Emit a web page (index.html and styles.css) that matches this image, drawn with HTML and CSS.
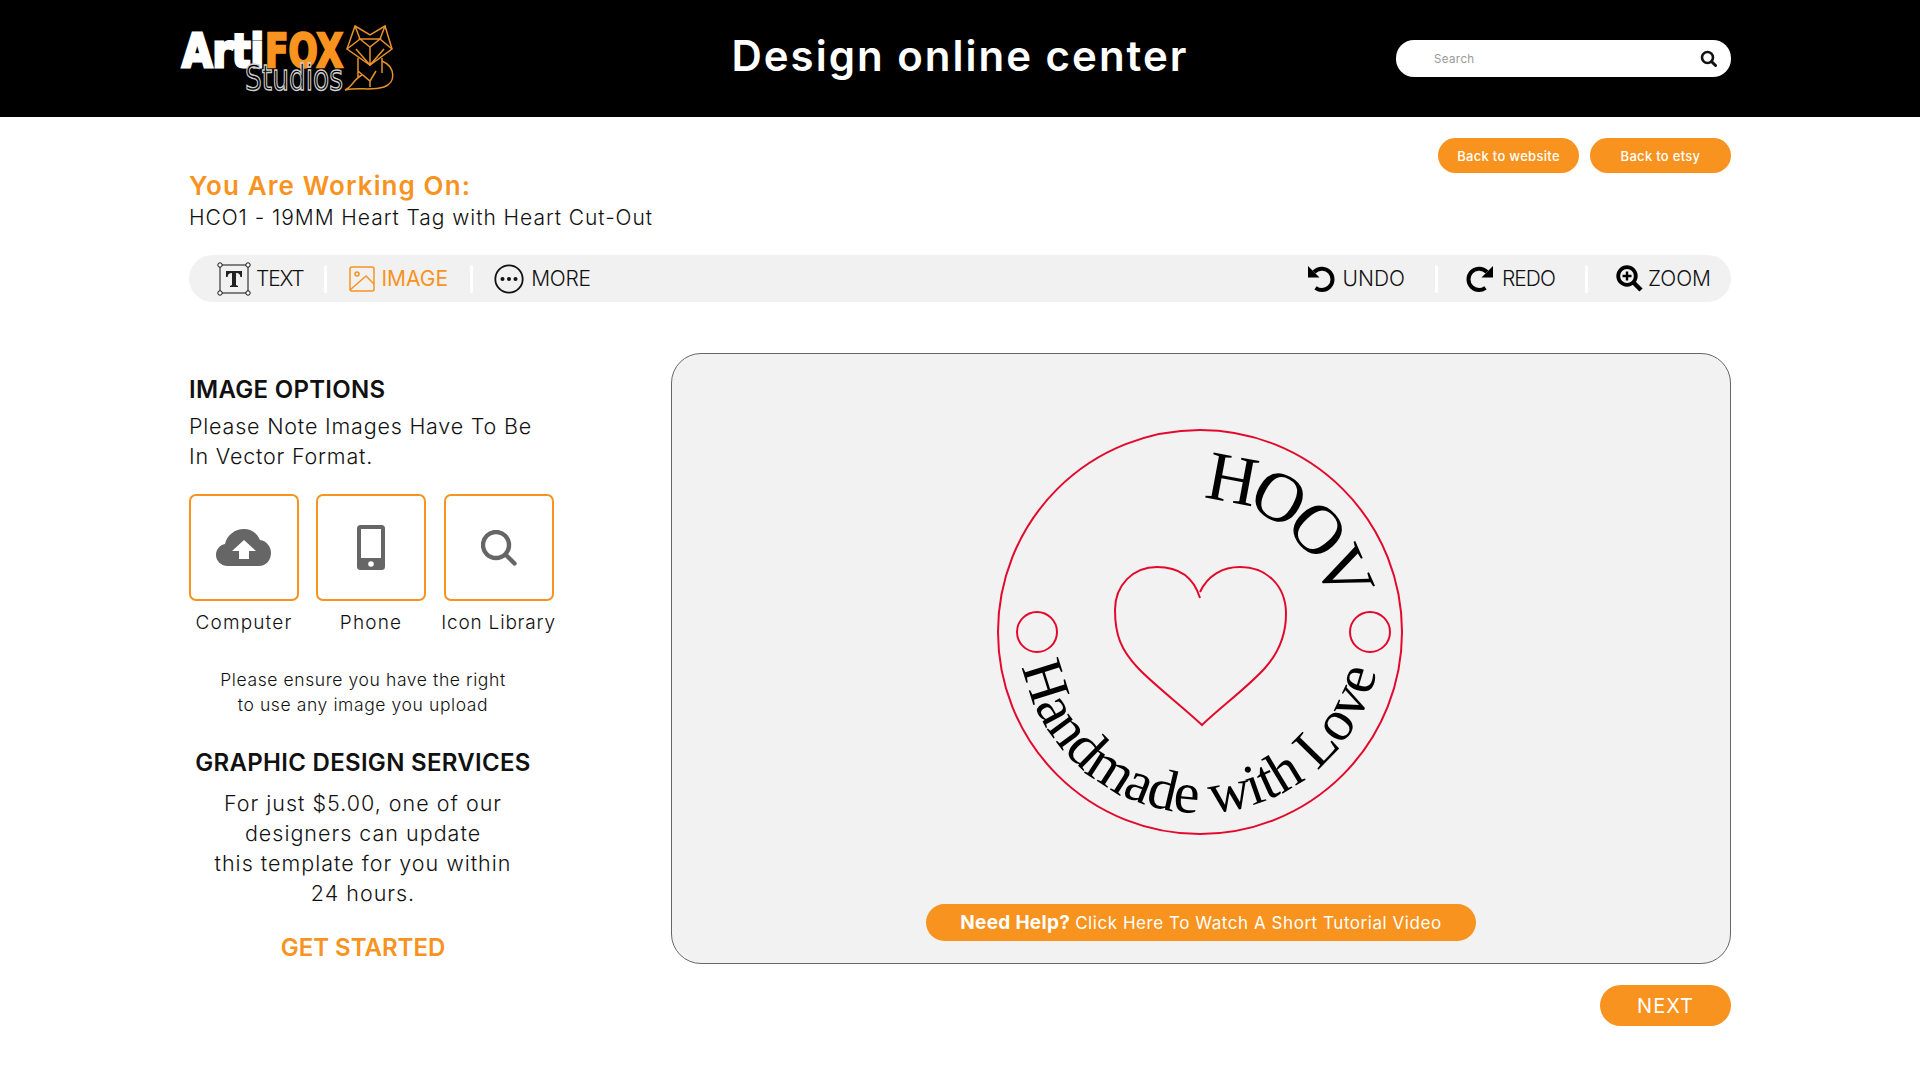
FILE: index.html
```html
<!DOCTYPE html>
<html lang="en">

<head>
    <meta charset="UTF-8">
    <meta name="viewport" content="width=device-width, initial-scale=1.0">
    <title>Design online center</title>

    <link rel="stylesheet" href="styles.css">
</head>

<body>
    <header class="top-bar">
        <svg class="logo" width="215" height="76" viewBox="0 0 215 76">
            <text class="logo-arti" x="2" y="46" textLength="82" lengthAdjust="spacingAndGlyphs">Arti</text>
            <text class="logo-fox" x="85" y="46" textLength="78" lengthAdjust="spacingAndGlyphs">FOX</text>
            <text class="logo-studios" x="65" y="69" textLength="98" lengthAdjust="spacingAndGlyphs">Studios</text>
            <g class="logo-mark">
                <path d="M175 5 L190 14 L205 5 L212 28 L190 44 L167 28 Z" />
                <path d="M175 5 L180 18 L167 28 M205 5 L200 18 L212 28 M180 18 H200 L190 26 Z M176 28 L190 44 L204 28 M190 26 V44" />
                <path d="M178 37 V56 M202 37 V52 M178 50 L190 60 L196 50 M190 60 V66" />
                <path d="M165 69 C172 66 174 58 182 54 M202 40 C216 46 216 62 204 66 C192 70 178 66 165 69" />
            </g>
        </svg>
        <h1 class="site-title">Design online center</h1>
        <div class="search-box">
            <span class="search-hint">Search</span>
            <svg width="17" height="17" viewBox="0 0 17 17">
                <circle cx="7.5" cy="7.5" r="5.5" fill="none" stroke="#111" stroke-width="2.6" />
                <path d="M11.5 11.5 L15.5 15.5" stroke="#111" stroke-width="3" stroke-linecap="round" />
            </svg>
        </div>
    </header>

    <main class="page">
        <div class="back-links">
            <a class="back-button" href="#">Back to website</a>
            <a class="back-button" href="#">Back to etsy</a>
        </div>

        <h2 class="working-title">You Are Working On:</h2>
        <p class="working-product">HCO1 - 19MM Heart Tag with Heart Cut-Out</p>

        <div class="toolbar">
            <div class="tool-group">
                <a class="tool tool-text" href="#">
                    <svg width="34" height="34" viewBox="0 0 34 34">
                        <rect x="3" y="3" width="28" height="28" fill="none" stroke="#111" stroke-width="1" />
                        <circle cx="3" cy="3" r="2.2" fill="#fff" stroke="#111" />
                        <circle cx="31" cy="3" r="2.2" fill="#fff" stroke="#111" />
                        <circle cx="3" cy="31" r="2.2" fill="#fff" stroke="#111" />
                        <circle cx="31" cy="31" r="2.2" fill="#fff" stroke="#111" />
                        <path d="M9 9 H25 V15 H23.4 C23 12 22 11 19 11 V23 L21 24 V25 H13 V24 L15 23 V11 C12 11 11 12 10.600 15 H9 Z" fill="#222" />
                    </svg>
                    <span>TEXT</span>
                </a>
                <span class="tool-sep"></span>
                <a class="tool tool-active tool-image" href="#">
                    <svg width="26" height="26" viewBox="0 0 26 26" fill="none" stroke="#f7931e" stroke-width="1.5">
                        <rect x="1" y="1" width="24" height="24" rx="2" />
                        <circle cx="8" cy="8" r="2" />
                        <path d="M1 24 L17 10 L25 18" />
                    </svg>
                    <span>IMAGE</span>
                </a>
                <span class="tool-sep"></span>
                <a class="tool tool-more" href="#">
                    <svg width="30" height="30" viewBox="0 0 30 30">
                        <circle cx="15" cy="15" r="13.700" fill="none" stroke="#111" stroke-width="1.800" />
                        <circle cx="8.500" cy="15" r="2" fill="#111" />
                        <circle cx="15" cy="15" r="2" fill="#111" />
                        <circle cx="21.500" cy="15" r="2" fill="#111" />
                    </svg>
                    <span>MORE</span>
                </a>
            </div>
            <div class="tool-group tool-group-right">
                <a class="tool tool-undo" href="#">
                    <svg width="28" height="28" viewBox="0 0 28 28" fill="none">
                        <path d="M7 7 C10 4 13 3.500 15.500 3.700 C21.500 4.200 25.500 8.800 25.500 14.500 C25.500 20.500 20.500 25 15 25 C12.500 25 10.500 24.200 8.500 22.800" stroke="#000" stroke-width="4" />
                        <path d="M1 1 L1 12.500 L12.500 12.500 Z" fill="#000" />
                    </svg>
                    <span>UNDO</span>
                </a>
                <span class="tool-sep"></span>
                <a class="tool tool-redo" href="#">
                    <svg width="28" height="28" viewBox="0 0 28 28" fill="none">
                        <path d="M21 7 C18 4 15 3.500 12.500 3.700 C6.500 4.200 2.500 8.800 2.500 14.500 C2.500 20.500 7.500 25 13 25 C15.500 25 17.500 24.200 19.500 22.800" stroke="#000" stroke-width="4" />
                        <path d="M27 1 L27 12.500 L15.500 12.500 Z" fill="#000" />
                    </svg>
                    <span>REDO</span>
                </a>
                <span class="tool-sep"></span>
                <a class="tool tool-zoom" href="#">
                    <svg width="27" height="27" viewBox="0 0 27 27" fill="none">
                        <circle cx="11" cy="11" r="8.800" stroke="#000" stroke-width="3.800" />
                        <path d="M17.500 17.500 L25 25" stroke="#000" stroke-width="4.500" />
                        <path d="M11 6.500 V15.500 M6.500 11 H15.500" stroke="#000" stroke-width="2.400" />
                    </svg>
                    <span>ZOOM</span>
                </a>
            </div>
        </div>

        <div class="workspace">
            <section class="options">
                <h3 class="options-title">IMAGE OPTIONS</h3>
                <p class="options-note">Please Note Images Have To Be<br>In Vector Format.</p>

                <div class="sources">
                    <div class="source">
                        <a class="source-box" href="#">
                            <svg width="56" height="38" viewBox="0 0 56 38">
                                <path d="M12 37 C5 37 0 32 0 26 C0 20 4 16 9 15 C11 6 19 0 28 0 C35 0 41 4 44 11 C51 12 55 18 55 24 C55 31 50 37 43 37 Z" fill="#666" />
                                <path d="M28 11 L40 22 H33 V30 H23 V22 H16 Z" fill="#fff" />
                            </svg>
                        </a>
                        <span class="source-label">Computer</span>
                    </div>
                    <div class="source">
                        <a class="source-box" href="#">
                            <svg width="28" height="45" viewBox="0 0 28 45">
                                <rect width="28" height="45" rx="3.500" fill="#666" />
                                <rect x="4" y="4" width="20" height="29" fill="#fff" />
                                <circle cx="14" cy="39" r="2.800" fill="#fff" />
                            </svg>
                        </a>
                        <span class="source-label">Phone</span>
                    </div>
                    <div class="source source-library">
                        <a class="source-box" href="#">
                            <svg width="36" height="36" viewBox="0 0 36 36" fill="none" stroke="#666">
                                <circle cx="15" cy="15" r="13" stroke-width="4.400" />
                                <path d="M25 25 L33.500 33.500" stroke-width="4.400" stroke-linecap="round" />
                            </svg>
                        </a>
                        <span class="source-label">Icon Library</span>
                    </div>
                </div>

                <p class="rights-note">Please ensure you have the right<br>to use any image you upload</p>

                <h3 class="services-title">GRAPHIC DESIGN SERVICES</h3>
                <p class="services-text">For just $5.00, one of our<br>designers can update<br>this template for you within<br>24 hours.</p>
                <a class="get-started" href="#">GET STARTED</a>
            </section>

            <section class="design-area">
                <div class="canvas">
                    <svg class="tag" width="424" height="424" viewBox="0 0 424 424">
                        <defs>
                            <path id="arc-top" d="M212 79 A133 133 0 0 1 345 212" />
                            <path id="arc-bottom" d="M31 212 A181 181 0 0 0 393 212" />
                        </defs>
                        <g class="cut-lines">
                            <circle cx="212" cy="212" r="202" />
                            <circle cx="49" cy="212" r="20" />
                            <circle cx="382" cy="212" r="20" />
                            <path d="M212 178 C205 155 188 147 169 147 C145 147 127 165 127 190 C127 215 133 230 150 248 C165 264 195 287 214 305 C233 287 262 265 277 248 C293 230 298 212 298 194 C298 165 278 147 252 147 C235 147 220 155 212 172" />
                        </g>
                        <text class="tag-top"><textPath href="#arc-top" startOffset="3">HOOV</textPath></text>
                        <text class="tag-bottom"><textPath href="#arc-bottom" startOffset="49.500%" text-anchor="middle">Handmade with Love</textPath></text>
                    </svg>
                    <a class="help-button" href="#"><b>Need Help?</b> Click Here To Watch A Short Tutorial Video</a>
                </div>
                <a class="next-button" href="#">NEXT</a>
            </section>
        </div>
    </main>
</body>

</html>
```

FILE: styles.css
```css
* {
    box-sizing: border-box;
}

body {
    margin: 0;
    background-color: white;
    color: #111;
    font-family: Inter, "Open Sans", sans-serif;
}

a {
    text-decoration: none;
    color: inherit;
}

h1,
h2,
h3,
p {
    margin: 0;
}

/* Header */
.top-bar {
    height: 117px;
    background-color: black;
    padding: 0 189px;
    display: grid;
    grid-template-columns: 1fr auto 1fr;
    align-items: center;
}

.logo {
    margin-left: -9px;
}

.logo-arti,
.logo-fox {
    font-family: "DejaVu Sans", sans-serif;
    font-weight: 700;
    font-size: 46px;
}

.logo-arti {
    fill: white;
    stroke: white;
    stroke-width: 3px;
}

.logo-fox {
    fill: #f7931e;
    stroke: #f7931e;
    stroke-width: 2.500px;
}

.logo-studios {
    font-family: "DejaVu Sans", sans-serif;
    font-size: 36px;
    fill: black;
    stroke: #cfcfcf;
    stroke-width: 1.400px;
}

.logo-mark {
    fill: none;
    stroke: #e8912a;
    stroke-width: 1.5px;
}

.site-title {
    color: white;
    font-size: 42px;
    font-weight: 600;
    letter-spacing: 2px;
    margin-bottom: 7px;
}

.search-box {
    justify-self: end;
    width: 335px;
    height: 37px;
    background-color: white;
    border-radius: 18px;
    padding: 0 14px 0 38px;
    display: flex;
    align-items: center;
    justify-content: space-between;
}

.search-hint {
    color: #999;
    font-size: 11.5px;
    letter-spacing: 0.4px;
}

/* Page */
.page {
    padding: 21px 189px 0;
}

.back-links {
    display: flex;
    justify-content: flex-end;
    gap: 11px;
}

.back-button {
    width: 141px;
    height: 35px;
    background-color: #f7931e;
    border-radius: 18px;
    color: white;
    font-size: 13px;
    font-weight: 500;
    letter-spacing: 0.3px;
    display: flex;
    align-items: center;
    justify-content: center;
}

.working-title {
    color: #f7931e;
    font-size: 26px;
    font-weight: 600;
    letter-spacing: 1.1px;
    line-height: 32px;
    margin-top: -3px;
}

.working-product {
    font-size: 21px;
    font-weight: 300;
    letter-spacing: 0.95px;
    line-height: 32px;
}

.toolbar {
    height: 47px;
    margin-top: 21px;
    background-color: #f1f1f1;
    border-radius: 24px;
    display: flex;
    justify-content: space-between;
    align-items: center;
    padding: 0 20px 0 28px;
}

.tool-group {
    display: flex;
    align-items: center;
}

.tool {
    display: flex;
    align-items: center;
    gap: 6px;
    font-size: 21px;
    font-weight: 300;
    letter-spacing: 0;
    color: #111;
}

.tool-text {
    gap: 5px;
    letter-spacing: -1.200px;
}

.tool-active {
    color: #f7931e;
    font-weight: 400;
    margin-right: 1px;
    margin-left: 1px;
}

.tool-more {
    gap: 7px;
    letter-spacing: -0.300px;
}

.tool-undo,
.tool-redo {
    gap: 8px;
}

.tool-redo {
    letter-spacing: -1px;
}

.tool-zoom {
    gap: 5px;
}

.tool-sep {
    width: 3px;
    height: 28px;
    margin: 0 21px;
    background-color: white;
    border-radius: 2px;
}

.tool-group-right .tool-sep {
    margin: 0 28px 0 30px;
}

.workspace {
    display: grid;
    grid-template-columns: 348px 1060px;
    justify-content: space-between;
    margin-top: 51px;
}

/* Left column */
.options {
    padding-top: 22px;
}

.options-title {
    font-size: 24px;
    font-weight: 600;
    letter-spacing: 0.3px;
    line-height: 30px;
}

.options-note {
    font-size: 21.500px;
    font-weight: 300;
    letter-spacing: 0.8px;
    line-height: 30px;
    margin-top: 6px;
}

.sources {
    display: grid;
    grid-template-columns: 110px 110px 110px;
    gap: 17px;
    margin-top: 23px;
}

.source {
    display: flex;
    flex-direction: column;
    align-items: center;
    gap: 10px;
}

.source-library {
    margin-left: 1px;
}

.source-box {
    width: 110px;
    height: 107px;
    border: 2px solid #f7931e;
    border-radius: 7px;
    display: flex;
    align-items: center;
    justify-content: center;
}

.source-label {
    font-size: 19px;
    font-weight: 300;
    letter-spacing: 1.150px;
    line-height: 24px;
    white-space: nowrap;
}

.source-library .source-label {
    letter-spacing: 0.800px;
}

.rights-note {
    text-align: center;
    font-size: 17.500px;
    font-weight: 300;
    letter-spacing: 0.6px;
    line-height: 25px;
    margin-top: 32px;
}

.services-title {
    text-align: center;
    font-size: 24px;
    font-weight: 600;
    letter-spacing: 0.3px;
    line-height: 30px;
    margin-top: 31px;
}

.services-text {
    text-align: center;
    font-size: 21.500px;
    font-weight: 300;
    letter-spacing: 1px;
    line-height: 30px;
    margin-top: 10px;
}

.get-started {
    display: block;
    text-align: center;
    color: #f7931e;
    font-size: 24px;
    font-weight: 600;
    letter-spacing: 0;
    line-height: 30px;
    margin-top: 25px;
}

/* Right column */
.canvas {
    height: 611px;
    background-color: #f2f2f2;
    border: 1px solid #666;
    border-radius: 30px;
    padding-top: 66px;
    display: flex;
    flex-direction: column;
    align-items: center;
}

.tag {
    margin-left: -2px;
}

.cut-lines {
    fill: none;
    stroke: #e3092d;
    stroke-width: 2px;
}

.tag-top,
.tag-bottom {
    font-family: "Liberation Serif", serif;
    fill: black;
}

.tag-top {
    font-size: 70px;
    letter-spacing: -7.500px;
}

.tag-bottom {
    font-size: 58px;
    letter-spacing: -0.500px;
}

.help-button {
    width: 550px;
    height: 37px;
    margin-top: 60px;
    background-color: #f7931e;
    border-radius: 19px;
    color: white;
    font-size: 17px;
    letter-spacing: 0.55px;
    display: flex;
    align-items: center;
    justify-content: center;
    gap: 5px;
}

.help-button b {
    font-size: 19px;
    font-weight: 700;
    letter-spacing: 0.3px;
}

.next-button {
    width: 131px;
    height: 41px;
    margin: 21px 0 0 auto;
    background-color: #f7931e;
    border-radius: 21px;
    color: white;
    font-size: 20px;
    font-weight: 400;
    letter-spacing: 1px;
    display: flex;
    align-items: center;
    justify-content: center;
}
```
